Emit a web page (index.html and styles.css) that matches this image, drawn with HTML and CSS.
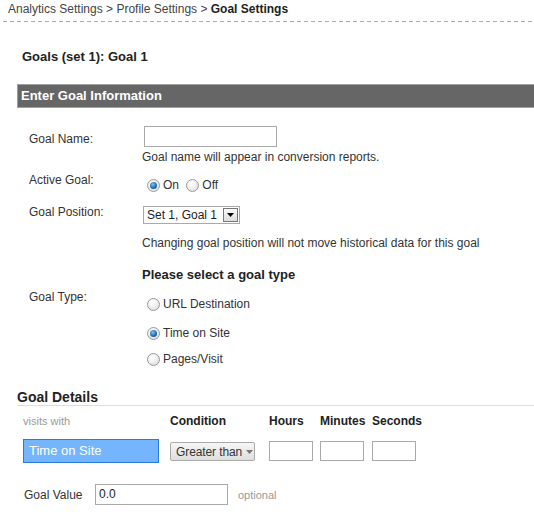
FILE: index.html
```html
<!DOCTYPE html>
<html>
<head>
<meta charset="utf-8">
<link rel="stylesheet" href="styles.css">
</head>
<body>
<div class="crumb">Analytics Settings &gt; Profile Settings &gt; <b>Goal Settings</b></div>
<div class="dash"></div>
<h1 class="title">Goals (set 1): Goal 1</h1>
<div class="bar">Enter Goal Information</div>

<div class="form">
  <div class="row r-name">
    <div class="label lp5">Goal Name:</div>
    <div class="field">
      <span class="input w133"></span>
      <div class="hint">Goal name will appear in conversion reports.</div>
    </div>
  </div>
  <div class="row r-active">
    <div class="label">Active Goal:</div>
    <div class="field fp5">
      <span class="opt"><span class="radio on"></span>On</span>
      <span class="opt"><span class="radio"></span>Off</span>
    </div>
  </div>
  <div class="row r-pos">
    <div class="label">Goal Position:</div>
    <div class="field">
      <span class="select">Set 1, Goal 1<span class="sbtn"><svg width="7" height="4" viewBox="0 0 7 4"><path d="M0 0h7L3.5 4z" fill="#000"/></svg></span></span>
    </div>
  </div>
  <div class="row r-hint2">
    <div class="label"></div>
    <div class="field"><div class="hint">Changing goal position will not move historical data for this goal</div></div>
  </div>
  <div class="row r-please">
    <div class="label"></div>
    <div class="field"><div class="please">Please select a goal type</div></div>
  </div>
  <div class="row r-type">
    <div class="label">Goal Type:</div>
    <div class="field">
      <div class="opt o1"><span class="radio"></span>URL Destination</div>
      <div class="opt o2"><span class="radio on"></span>Time on Site</div>
      <div class="opt o3"><span class="radio"></span>Pages/Visit</div>
    </div>
  </div>
</div>

<h2 class="details">Goal Details</h2>
<div class="grid">
  <div class="muted">visits with</div>
  <div class="th">Condition</div>
  <div class="th">Hours</div>
  <div class="th">Minutes</div>
  <div class="th">Seconds</div>
  <div class="ctl"><span class="tos">Time on Site</span></div>
  <div class="ctl"><span class="btn">Greater than<svg width="7" height="4" viewBox="0 0 7 4"><path d="M0 0h7L3.5 4z" fill="#777"/></svg></span></div>
  <div class="ctl"><span class="input small"></span></div>
  <div class="ctl"><span class="input small"></span></div>
  <div class="ctl"><span class="input small"></span></div>
</div>
<div class="value">
  <span class="vlabel">Goal Value</span>
  <span class="input vinput">0.0</span>
  <span class="optional">optional</span>
</div>
</body>
</html>
```
FILE: styles.css
```css
body {
  margin: 0;
  font-family: "Liberation Sans", Arial, sans-serif;
  font-size: 12px;
  color: #333;
  background: #fff;
  overflow: hidden;
}
.crumb {
  padding: 2px 0 0 8px;
  line-height: 14px;
  height: 14px;
  color: #444;
}
.crumb b { color: #222; }
.dash {
  margin: 5px 0 0 3px;
  height: 1px;
  background: repeating-linear-gradient(to right, #aaa 0 4px, transparent 4px 7px);
}
.title {
  margin: 27px 0 0 22px;
  font-size: 13px;
  line-height: 16px;
  height: 16px;
  color: #222;
}
.bar {
  margin: 19px 0 0 17px;
  height: 22px;
  border: 1px solid #a0a0a0;
  border-right: none;
  background: #666;
  color: #fff;
  font-weight: bold;
  font-size: 13px;
  line-height: 22px;
  padding-left: 3px;
}
.form { padding-left: 29px; margin-top: 18px; }
.row { display: flex; }
.label { width: 113px; flex: none; line-height: 14px; color: #333; }
.lp5 { padding-top: 6px; }
.field { line-height: 14px; }
.fp5 { padding-top: 5px; }
.r-name { height: 47px; }
.r-name .input { margin-left: 2px; }
.r-name .hint { margin-top: 3px; }
.r-active { height: 32px; }
.r-pos { height: 31px; }
.r-hint2 { height: 31px; }
.r-please { height: 23px; }
.r-type { height: 76px; }
.input {
  display: inline-block;
  box-sizing: border-box;
  border: 1px solid #aaa;
  background: #fff;
  vertical-align: top;
}
.w133 { width: 133px; height: 21px; }
.hint { color: #333; }
.opt { display: inline-flex; align-items: center; color: #333; }
.r-active .opt { margin-left: 5px; }
.r-active .opt + .opt { margin-left: 4px; }
.radio {
  width: 11px;
  height: 11px;
  border-radius: 50%;
  border: 1px solid #9a9a9a;
  background: radial-gradient(circle at 40% 35%, #fff 0, #f2f2f2 40%, #d4d4d4 100%);
  margin-right: 3px;
  position: relative;
  flex: none;
}
.radio.on::after {
  content: "";
  position: absolute;
  left: 2px;
  top: 2px;
  width: 7px;
  height: 7px;
  border-radius: 50%;
  background: radial-gradient(circle at 40% 35%, #7ec3f0 0, #1f6fb5 55%, #0c3f73 100%);
}
.select {
  display: inline-flex;
  align-items: center;
  box-sizing: border-box;
  margin: 1px 0 0 1px;
  height: 18px;
  width: 97px;
  border: 1px solid #aaa;
  padding-left: 3px;
  color: #222;
  font-size: 12px;
  position: relative;
}
.sbtn {
  position: absolute;
  right: 0;
  top: 0;
  width: 15px;
  height: 14px;
  margin: 1px;
  box-sizing: border-box;
  border: 1px solid #777;
  background: linear-gradient(#fafafa, #ddd);
  display: flex;
  align-items: center;
  justify-content: center;
}
.please {
  font-weight: bold;
  font-size: 13px;
  line-height: 16px;
  color: #222;
}
.r-type .opt { display: flex; margin-left: 5px; }
.o1 { margin-top: 7px; }
.o2 { margin-top: 15px; }
.o3 { margin-top: 12px; }
.details {
  margin: 23px 0 0 17px;
  font-size: 14px;
  line-height: 16px;
  color: #222;
  border-bottom: 1px solid #ddd;
  padding-bottom: 0;
  height: 16px;
}
.grid {
  display: grid;
  grid-template-columns: 147px 99px 51px 52px 60px;
  padding-left: 23px;
  margin-top: 8px;
}
.muted { color: #999; font-size: 11px; line-height: 14px; }
.th { font-weight: bold; line-height: 14px; color: #222; }
.ctl { margin-top: 11px; height: 24px; display: flex; align-items: center; }
.tos {
  box-sizing: border-box;
  width: 136px;
  height: 24px;
  background: #75b5fd;
  border: 1px solid #2a7ae6;
  color: #fff;
  font-size: 13px;
  line-height: 22px;
  padding-left: 5px;
}
.btn {
  box-sizing: border-box;
  width: 85px;
  height: 19px;
  border: 1px solid #aaa;
  border-radius: 2px;
  background: linear-gradient(#f6f6f6, #dedede);
  color: #333;
  display: flex;
  align-items: center;
  gap: 4px;
  padding-left: 5px;
  margin-top: 1px;
  white-space: nowrap;
  letter-spacing: -0.1px;
}
.btn svg { flex: none; }
.small { width: 44px; height: 20px; }
.value {
  display: flex;
  align-items: center;
  margin-top: 21px;
  padding-left: 24px;
  height: 21px;
}
.vlabel { width: 71px; color: #333; }
.vinput {
  width: 133px;
  height: 21px;
  line-height: 19px;
  padding-left: 3px;
  color: #222;
}
.optional { margin-left: 10px; color: #999; font-size: 11px; }
```
